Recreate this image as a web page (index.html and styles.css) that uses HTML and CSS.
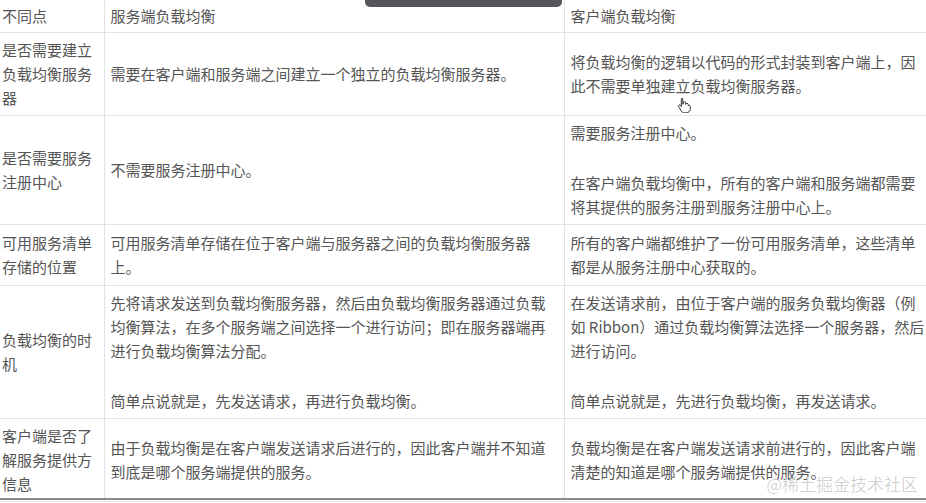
FILE: index.html
```html
<!DOCTYPE html>
<html>
<head>
  <meta charset="UTF-8" />
  <title>服务端负载均衡与客户端负载均衡</title>
  <link rel="stylesheet" href="styles.css">
</head>
<body>
  <div class="page">
    <table class="compare">
      <colgroup>
        <col class="col-key" />
        <col class="col-server" />
        <col class="col-client" />
      </colgroup>
      <tr class="head">
        <td>不同点</td>
        <td>服务端负载均衡</td>
        <td>客户端负载均衡</td>
      </tr>
      <tr>
        <td>是否需要建立负载均衡服务器</td>
        <td>需要在客户端和服务端之间建立一个独立的负载均衡服务器。</td>
        <td>将负载均衡的逻辑以代码的形式封装到客户端上，因此不需要单独建立负载均衡服务器。</td>
      </tr>
      <tr>
        <td>是否需要服务注册中心</td>
        <td>不需要服务注册中心。</td>
        <td>
          <p>需要服务注册中心。</p>
          <p>在客户端负载均衡中，所有的客户端和服务端都需要将其提供的服务注册到服务注册中心上。</p>
        </td>
      </tr>
      <tr class="short">
        <td>可用服务清单存储的位置</td>
        <td>可用服务清单存储在位于客户端与服务器之间的负载均衡服务器上。</td>
        <td>所有的客户端都维护了一份可用服务清单，这些清单都是从服务注册中心获取的。</td>
      </tr>
      <tr>
        <td>负载均衡的时机</td>
        <td>
          <p>先将请求发送到负载均衡服务器，然后由负载均衡服务器通过负载均衡算法，在多个服务端之间选择一个进行访问；即在服务器端再进行负载均衡算法分配。</p>
          <p>简单点说就是，先发送请求，再进行负载均衡。</p>
        </td>
        <td>
          <p>在发送请求前，由位于客户端的服务负载均衡器（例如 Ribbon）通过负载均衡算法选择一个服务器，然后进行访问。</p>
          <p>简单点说就是，先进行负载均衡，再发送请求。</p>
        </td>
      </tr>
      <tr>
        <td>客户端是否了解服务提供方信息</td>
        <td>由于负载均衡是在客户端发送请求后进行的，因此客户端并不知道到底是哪个服务端提供的服务。</td>
        <td>负载均衡是在客户端发送请求前进行的，因此客户端清楚的知道是哪个服务端提供的服务。</td>
      </tr>
    </table>

    <!-- overlays from the player -->
    <div class="top-bar"></div>
    <div class="bottom-rule"></div>
    <svg class="cursor" width="14" height="16" viewBox="0 0 14 16">
      <path d="M4.5 1.5c.8 0 1.3.6 1.3 1.3v4.4l.4-.1V5.8c0-.7.5-1.2 1.2-1.2s1.2.5 1.2 1.200v1.5l.3-.1c.2-.6.6-.9 1.1-.9.7 0 1.2.5 1.2 1.2v1.2c.3-.3.6-.4 1-.4.6 0 1.1.5 1.1 1.2v2.2c0 2.4-1.7 4.1-4.1 4.1H7.4c-1.3 0-2.3-.6-3-1.7L1.6 9.6c-.3-.6-.1-1.2.4-1.5.5-.3 1.2-.2 1.5.3l.8 1.1V2.8c0-.7.5-1.3 1.2-1.3z" fill="#fff" stroke="#333" stroke-width="1"/>
    </svg>
    <div class="watermark">@稀土掘金技术社区</div>
  </div>
</body>
</html>
```

FILE: styles.css
```css
html, body {
  margin: 0;
  padding: 0;
  background: #fff;
  overflow: hidden;
}

.page {
  position: relative;
  width: 926px;
  height: 503px;
  overflow: hidden;
}

.compare {
  border-collapse: collapse;
  table-layout: fixed;
  width: 936px;
  font-family: "Noto Sans CJK SC", "Noto Sans", sans-serif;
  font-size: 15px;
  line-height: 24px;
  color: #555;
}

.col-key {
  width: 104px;
}

.col-server {
  width: 460px;
}

.col-client {
  width: 372px;
}

.compare td {
  padding: 5px 7px 5px 6px;
  border: 1px solid #e3e3e3;
  vertical-align: middle;
  word-break: break-all;
}

.compare td:first-child {
  border-left: none;
  padding-left: 2px;
}

.compare tr.head td {
  border-top: none;
  padding-top: 4px;
  padding-bottom: 4px;
}

.compare tr.short td {
  padding-top: 6px;
  padding-bottom: 6px;
}

.compare p {
  margin: 0;
}

.compare p + p {
  margin-top: 26px;
}

.top-bar {
  position: absolute;
  top: 0;
  left: 365px;
  width: 197px;
  height: 7px;
  background: #55565a;
  border-radius: 0 0 5px 5px;
}

.bottom-rule {
  position: absolute;
  left: 0;
  right: 0;
  top: 498px;
  height: 2px;
  background: #8a8a8a;
}

.cursor {
  position: absolute;
  left: 677px;
  top: 97px;
}

.watermark {
  position: absolute;
  right: 8px;
  bottom: 7px;
  font-family: "Noto Sans CJK SC", sans-serif;
  font-size: 17px;
  font-weight: 300;
  color: rgba(190, 190, 190, 0.85);
  text-shadow: 0 0 1px #fff;
}
```
